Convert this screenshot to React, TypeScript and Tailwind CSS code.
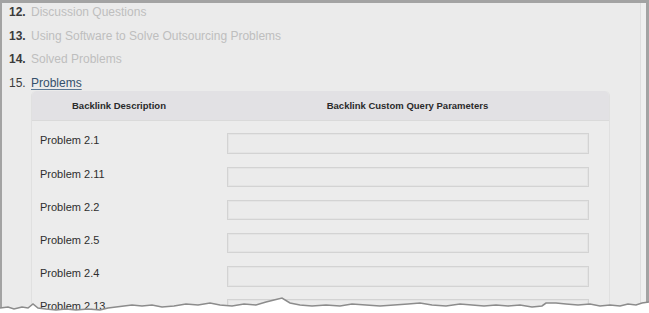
const chapters = [
  { n: '12.', title: 'Discussion Questions' },
  { n: '13.', title: 'Using Software to Solve Outsourcing Problems' },
  { n: '14.', title: 'Solved Problems' },
]

const problems = ['Problem 2.1', 'Problem 2.11', 'Problem 2.2', 'Problem 2.5', 'Problem 2.4', 'Problem 2.13']

// rough torn-paper edge along the bottom
const tear: [number, number][] = [
  [0, 308], [8, 307], [14, 309], [22, 307], [28, 308], [33, 304], [38, 308], [46, 309], [56, 310],
  [66, 309], [76, 310], [88, 309], [100, 310], [108, 308], [116, 307], [124, 306], [132, 305], [142, 306],
  [152, 305], [162, 307], [174, 306], [186, 304], [198, 305], [210, 303], [220, 305], [232, 306],
  [244, 304], [256, 305], [266, 302], [274, 300], [282, 298], [290, 303], [300, 305], [312, 306],
  [326, 305], [340, 306], [352, 304], [366, 305], [380, 306], [394, 305], [408, 304], [420, 303],
  [432, 305], [446, 306], [460, 304], [472, 305], [484, 306], [496, 305], [508, 306], [520, 305],
  [532, 307], [542, 306], [546, 303], [556, 303], [566, 304], [578, 305], [590, 304], [600, 306],
  [610, 305], [620, 306], [628, 304], [636, 305], [642, 303], [649, 302],
]

const TornEdge = () => {
  const line = tear.map(([x, y]) => `${x},${y - 290}`).join(' ')
  return (
    <svg className="absolute bottom-0 left-0" width="649" height="23" viewBox="0 0 649 23">
      <polygon points={`${line} 649,23 0,23`} fill="#ffffff" />
      <polyline points={line} fill="none" stroke="#8c8c8c" strokeWidth="1.6" />
    </svg>
  )
}

export default function App() {
  return (
    <div className="relative h-[313px] w-[649px] overflow-hidden bg-[#a3a3a3] pl-[2px] pr-[3px] pt-[3px] font-['Liberation_Sans',Arial,sans-serif]">
      <div className="flex h-full bg-[#ebebeb]">
        <div className="flex-1 pl-[7px]">
          <ol className="-mt-[2.5px] text-[12px]">
            {chapters.map((c) => (
              <li key={c.n} className="flex h-[23.6px] items-center">
                <span className="w-[22px] font-bold text-[#3b3b3b]">{c.n}</span>
                <span className="text-[#bebebe]">{c.title}</span>
              </li>
            ))}
            <li className="flex h-[23.6px] items-center">
              <span className="w-[22px] text-[#3b3b3b]">15.</span>
              <span className="text-[#34506b] underline decoration-[#5a7894] underline-offset-2">Problems</span>
            </li>
          </ol>
          <div className="-mt-[3.5px] ml-[22px] w-[579px] rounded-t-[5px] border-x border-[#e0e0e0] bg-[#ececec]">
            <div className="grid h-[30px] grid-cols-[174px_1fr] items-center rounded-t-[5px] border-b border-[#dadada] bg-[#e2e1e4] text-[9.5px] font-bold text-[#2a2a2a]">
              <span className="text-center">Backlink Description</span>
              <span className="text-center">Backlink Custom Query Parameters</span>
            </div>
            <div className="pt-[12px]">
              {problems.map((p) => (
                <div key={p} className="grid h-[33.2px] grid-cols-[195px_362px] items-start">
                  <span className="-mt-[1px] pl-[8px] text-[11px] text-[#2e2e2e]">{p}</span>
                  <div className="h-[20.5px] border border-[#d3d3d3] bg-[#ebebeb] shadow-[inset_0_0_0_1px_#e4e4e4]" />
                </div>
              ))}
            </div>
          </div>
        </div>
        <div className="w-[6px] border-l border-[#dedede] bg-[#efefef]" />
      </div>
      <TornEdge />
    </div>
  )
}
